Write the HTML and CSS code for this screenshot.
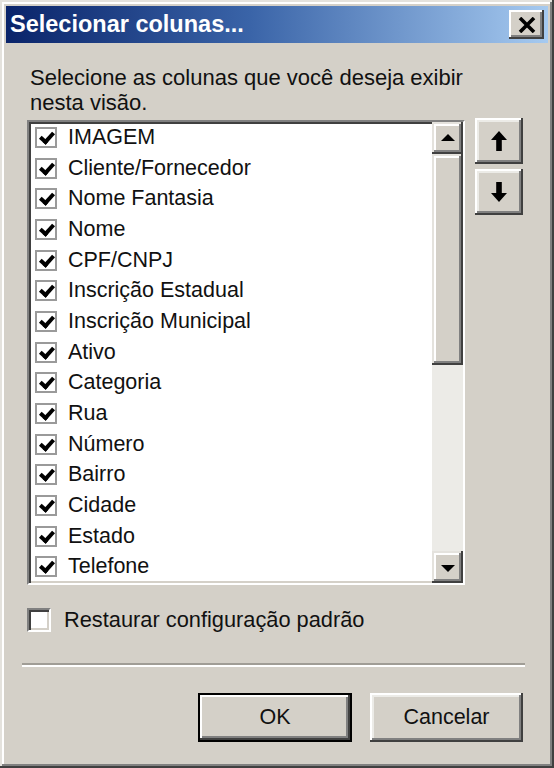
FILE: index.html
```html
<!DOCTYPE html>
<html lang="pt">
<head>
<meta charset="utf-8">
<title>Selecionar colunas...</title>
<link rel="stylesheet" href="styles.css">
</head>
<body>
<div class="window">
  <div class="titlebar">
    <span class="title">Selecionar colunas...</span>
    <button class="close" aria-label="Fechar">
      <svg width="18" height="16" viewBox="0 0 18 16"><path d="M2 1 L16 15 M16 1 L2 15" stroke="#000" stroke-width="3.6" fill="none"/></svg>
    </button>
  </div>
  <div class="content">
    <p class="label">Selecione as colunas que você deseja exibir<br>nesta visão.</p>
    <div class="main">
      <div class="listbox">
        <ul class="items">
          <li class="item"><span class="check"></span><span>IMAGEM</span></li>
          <li class="item"><span class="check"></span><span>Cliente/Fornecedor</span></li>
          <li class="item"><span class="check"></span><span>Nome Fantasia</span></li>
          <li class="item"><span class="check"></span><span>Nome</span></li>
          <li class="item"><span class="check"></span><span>CPF/CNPJ</span></li>
          <li class="item"><span class="check"></span><span>Inscrição Estadual</span></li>
          <li class="item"><span class="check"></span><span>Inscrição Municipal</span></li>
          <li class="item"><span class="check"></span><span>Ativo</span></li>
          <li class="item"><span class="check"></span><span>Categoria</span></li>
          <li class="item"><span class="check"></span><span>Rua</span></li>
          <li class="item"><span class="check"></span><span>Número</span></li>
          <li class="item"><span class="check"></span><span>Bairro</span></li>
          <li class="item"><span class="check"></span><span>Cidade</span></li>
          <li class="item"><span class="check"></span><span>Estado</span></li>
          <li class="item"><span class="check"></span><span>Telefone</span></li>
        </ul>
        <div class="scrollbar">
          <div class="sb-btn"><span class="tri-up"></span></div>
          <div class="sb-thumb"></div>
          <div class="sb-track"></div>
          <div class="sb-btn"><span class="tri-down"></span></div>
        </div>
      </div>
      <div class="side">
        <button class="move" aria-label="Mover para cima">
          <svg width="16" height="20" viewBox="0 0 16 20"><path d="M8 0 L16 9 L10.8 9 L10.8 20 L5.2 20 L5.2 9 L0 9 Z" fill="#000"/></svg>
        </button>
        <button class="move" aria-label="Mover para baixo">
          <svg width="16" height="20" viewBox="0 0 16 20"><path d="M8 20 L16 11 L10.8 11 L10.8 0 L5.2 0 L5.2 11 L0 11 Z" fill="#000"/></svg>
        </button>
      </div>
    </div>
    <label class="restore"><span class="box"></span><span>Restaurar configuração padrão</span></label>
    <div class="separator"></div>
    <div class="buttons">
      <button class="btn default">OK</button>
      <button class="btn">Cancelar</button>
    </div>
  </div>
</div>
</body>
</html>
```
FILE: styles.css
```css
html, body {
  margin: 0;
  padding: 0;
  background: #d4d0c8;
}
body {
  font-family: "Liberation Sans", Arial, sans-serif;
  font-size: 21.5px;
  color: #111;
}
.window {
  width: 554px;
  height: 768px;
  box-sizing: border-box;
  padding: 6px;
  background: #d4d0c8;
  box-shadow: inset -2px -2px #404040, inset 2px 2px #e4e2dd, inset -4px -4px #808080, inset 4px 4px #ffffff;
  display: flex;
  flex-direction: column;
}
.titlebar {
  height: 37px;
  flex: none;
  display: flex;
  align-items: center;
  justify-content: space-between;
  background: linear-gradient(to right, #0a246a 0%, #3a64a8 45%, #a6caf0 100%);
}
.title {
  color: #fff;
  font-weight: bold;
  font-size: 23.5px;
  padding-left: 4px;
  white-space: nowrap;
}
.close {
  width: 35px;
  height: 29px;
  margin-right: 4px;
  padding: 0;
  border: 0;
  background: #d4d0c8;
  display: flex;
  align-items: center;
  justify-content: center;
  box-shadow: inset -2px -2px #404040, inset 2px 2px #ffffff, inset -4px -4px #808080;
}
.content {
  padding: 22px 25px 0 21px;
  display: flex;
  flex-direction: column;
}
.label {
  margin: 0 0 5px 0;
  padding-left: 3px;
  font-size: 22px;
  line-height: 25px;
  height: 50px;
}
.main {
  display: flex;
  gap: 10px;
  align-items: flex-start;
}
.listbox {
  width: 438px;
  height: 465px;
  box-sizing: border-box;
  border: 2px solid;
  border-color: #808080 #ffffff #ffffff #808080;
  box-shadow: inset 2px 2px #404040, inset -2px -2px #d4d0c8;
  background: #fff;
  display: flex;
  overflow: hidden;
}
.items {
  list-style: none;
  margin: 0;
  padding: 0;
  flex: 1;
  overflow: hidden;
}
.item {
  height: 30.7px;
  display: flex;
  align-items: center;
  white-space: nowrap;
}
.check {
  width: 22px;
  height: 21px;
  box-sizing: border-box;
  margin-left: 6px;
  margin-right: 11px;
  border: 2px solid #9a9a9a;
  background: #fff;
  position: relative;
  flex: none;
}
.check::after {
  content: "";
  position: absolute;
  left: 3px;
  top: 1px;
  width: 10px;
  height: 5px;
  border-left: 4px solid #000;
  border-bottom: 4px solid #000;
  transform: translate(0px, 2px) rotate(-48deg);
  transform-origin: center;
}
.scrollbar {
  width: 31px;
  flex: none;
  display: flex;
  flex-direction: column;
  background: #ecebe7;
}
.sb-btn, .sb-thumb {
  background: #d4d0c8;
  box-shadow: inset -2px -2px #404040, inset 2px 2px #e4e2dd, inset -4px -4px #808080, inset 4px 4px #ffffff;
}
.sb-btn {
  height: 32px;
  flex: none;
  display: flex;
  align-items: center;
  justify-content: center;
}
.sb-thumb {
  height: 211px;
  flex: none;
}
.sb-track {
  flex: 1;
}
.tri-up, .tri-down {
  width: 0;
  height: 0;
  border-left: 7px solid transparent;
  border-right: 7px solid transparent;
}
.tri-up {
  border-bottom: 7px solid #000;
  margin-top: -2px;
}
.tri-down {
  border-top: 7px solid #000;
  margin-top: 2px;
}
.side {
  display: flex;
  flex-direction: column;
  gap: 5px;
  margin-top: -2px;
}
.move {
  width: 48px;
  height: 46px;
  padding: 0;
  border: 0;
  background: #d4d0c8;
  display: flex;
  align-items: center;
  justify-content: center;
  box-shadow: inset -2px -2px #404040, inset 2px 2px #ffffff, inset -4px -4px #808080, inset 4px 4px #ecebe7;
}
.restore {
  margin-top: 23px;
  height: 24px;
  display: flex;
  align-items: center;
  gap: 13px;
  font-size: 21.8px;
}
.box {
  width: 24px;
  height: 24px;
  box-sizing: border-box;
  border: 2px solid;
  border-color: #808080 #ffffff #ffffff #808080;
  box-shadow: inset 2px 2px #404040, inset -2px -2px #d4d0c8;
  background: #fff;
}
.separator {
  margin: 31px -2px 0 -5px;
  border-top: 2px solid #a09d96;
  border-bottom: 2px solid #ffffff;
  height: 0;
}
.buttons {
  margin-top: 26px;
  display: flex;
  justify-content: flex-end;
  gap: 18px;
}
.btn {
  width: 153px;
  height: 49px;
  padding: 0;
  border: 0;
  font-family: "Liberation Sans", Arial, sans-serif;
  font-size: 21.5px;
  color: #111;
  background: #d4d0c8;
  box-shadow: inset -2px -2px #404040, inset 2px 2px #ffffff, inset -4px -4px #808080, inset 4px 4px #ecebe7;
}
.btn.default {
  width: 154px;
  box-shadow: inset 0 0 0 2px #000, inset -4px -4px #404040, inset 4px 4px #ffffff, inset -6px -6px #808080;
}
```
